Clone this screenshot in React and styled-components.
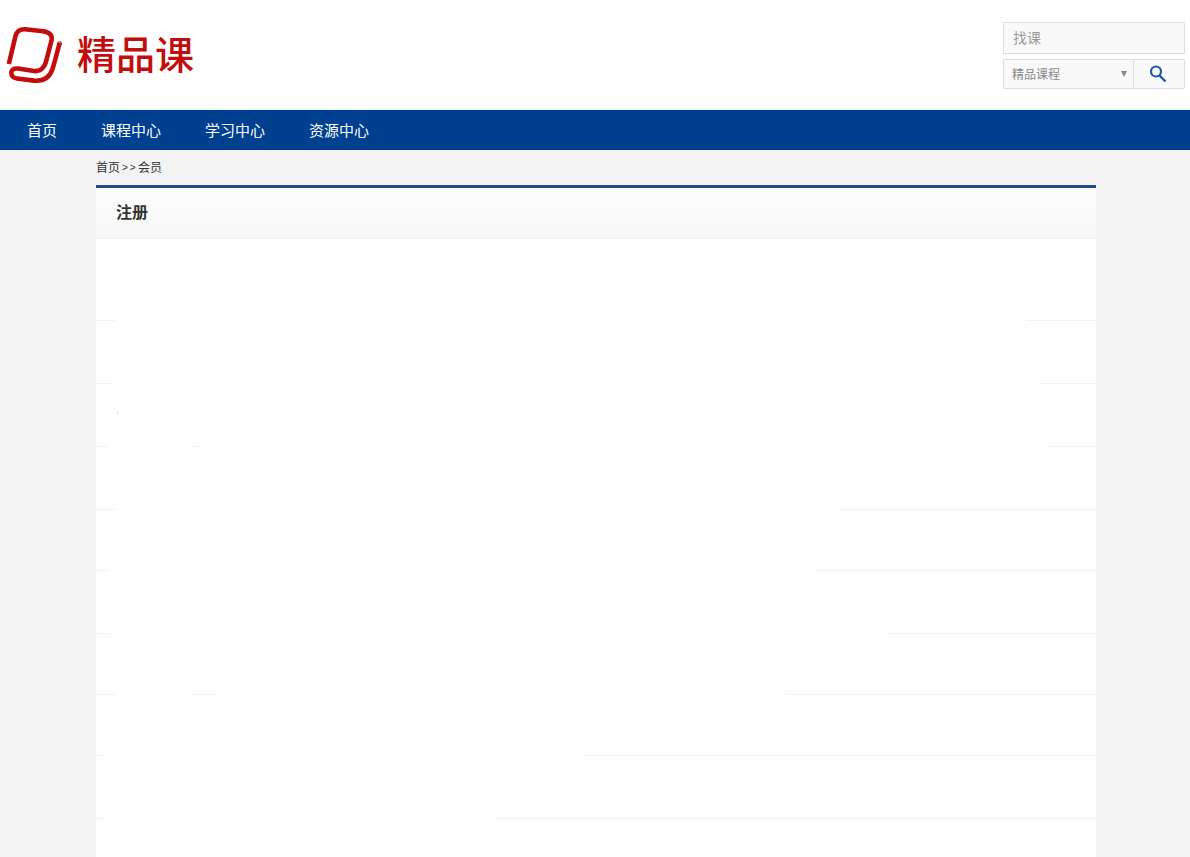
import React from "react";
import styled, { createGlobalStyle } from "styled-components";

const GlobalStyle = createGlobalStyle`
  *, *::before, *::after { box-sizing: border-box; }
  body {
    margin: 0;
    background: #f3f3f3;
    color: #333;
    font: 12px/20px "Noto Sans CJK SC", "Liberation Sans", sans-serif;
  }
`;

const Page = styled.div`
  display: flex;
  flex-direction: column;
  min-height: 100vh;
`;

const Header = styled.header`
  display: flex;
  justify-content: space-between;
  align-items: center;
  height: 110px;
  padding: 0 5px;
  background: #fff;
`;

const Brand = styled.a`
  display: flex;
  align-items: center;
  gap: 14px;
  color: #c30d0d;
  text-decoration: none;
`;

const LogoMark = styled.svg`
  width: 58px;
  height: 60px;
  fill: none;
  stroke: currentColor;
  stroke-width: 4.6;
  stroke-linejoin: round;
`;

const BrandName = styled.span`
  padding-bottom: 6px;
  font-size: 39px;
  font-weight: 500;
  line-height: 56px;
`;

const SearchForm = styled.form`
  display: flex;
  flex-direction: column;
  gap: 5px;
  width: 182px;
`;

const Keyword = styled.input`
  width: 100%;
  height: 32px;
  padding: 0 9px 2px;
  border: 1px solid #ddd;
  border-radius: 1px;
  background: #f9f9f9;
  color: #666;
  font: inherit;
  font-size: 14px;
  &::placeholder { color: #999; opacity: 1; }
`;

const SearchBar = styled.div`
  display: flex;
  height: 30px;
  border: 1px solid #ddd;
  border-radius: 1px;
  background: #f9f9f9;
`;

const ScopeField = styled.div`
  display: flex;
  position: relative;
  width: 130px;
  border-right: 1px solid #ddd;
`;

const Scope = styled.select`
  appearance: none;
  width: 100%;
  padding: 0 20px 0 8px;
  border: 0;
  background: transparent;
  color: #888;
  font: inherit;
`;

const Arrow = styled.svg`
  position: absolute;
  top: 10px;
  right: 6px;
  width: 6px;
  height: 8px;
  fill: #888;
  pointer-events: none;
`;

const SearchButton = styled.button`
  display: flex;
  flex: 1;
  align-items: center;
  justify-content: center;
  padding: 0 3px 0 0;
  border: 0;
  background: transparent;
  color: #1a5ba6;
  cursor: pointer;
`;

const SearchIcon = styled.svg`
  width: 18px;
  height: 18px;
  fill: none;
  stroke: currentColor;
`;

const Nav = styled.nav`
  display: flex;
  height: 40px;
  padding: 0 5px;
  border-bottom: 1px solid #003a85;
  background: #004090;
`;

const NavLink = styled.a`
  padding: 0 22px;
  color: #fff;
  font-size: 15px;
  line-height: 40px;
  text-decoration: none;
`;

const Main = styled.main`
  display: flex;
  flex: 1;
  flex-direction: column;
  width: 100%;
  max-width: 1002px;
  margin: 0 auto;
  padding-left: 2px;
`;

const Breadcrumb = styled.nav`
  display: flex;
  height: 35px;
  line-height: 33px;
`;

const Crumb = styled.a`
  color: #333;
  text-decoration: none;
`;

const Divider = styled.span`
  display: flex;
  gap: 2px;
  width: 18px;
  padding-left: 2px;
  font-family: "Liberation Sans", sans-serif;
  font-size: 10px;
  line-height: 36px;
`;

const Panel = styled.section`
  flex: 1;
  padding-bottom: 38px;
  border-top: 3px solid #234b87;
  background: #fff;
`;

const PanelTitle = styled.h1`
  height: 51px;
  margin: 0;
  padding: 0 20px;
  border-bottom: 1px solid #f3f3f3;
  background: linear-gradient(#fdfdfd, #f8f8f8);
  font-size: 16px;
  line-height: 46px;
`;

const Row = styled.div`
  display: flex;
  align-items: flex-end;
  height: ${({ $height }) => $height}px;
`;

const Rule = styled.span`
  width: ${({ $width }) => $width}px;
  height: 1px;
  margin-left: ${({ $gap }) => ($gap === undefined ? "auto" : `${$gap}px`)};
  background: #f3f3f3;
`;

const Tick = styled.span`
  align-self: center;
  width: 1px;
  height: 4px;
  margin: 0 0 6px 9px;
  background: #f3e2c4;
`;

const navItems = ["首页", "课程中心", "学习中心", "资源中心"];

const rows = [
  { height: 82, left: 20, right: 70 },
  { height: 63, left: 16, right: 56 },
  { height: 63, left: 12, tick: true, middle: { gap: 72, width: 12 }, right: 49 },
  { height: 63, left: 20, right: 256 },
  { height: 61, left: 13, right: 282 },
  { height: 63, left: 14, middle: { gap: 328, width: 3 }, right: 208 },
  { height: 61, left: 19, middle: { gap: 77, width: 25 }, right: 310 },
  { height: 61, left: 6, middle: { gap: 80, width: 3 }, right: 512 },
  { height: 63, left: 8, right: 600 },
];

export default function App() {
  return (
    <Page>
      <GlobalStyle />
      <Header>
        <Brand href="#">
          <LogoMark viewBox="0 0 58 60" aria-hidden="true">
            <path d="M3.800 39 L10.500 11 Q12.500 4 20 4.300 L38.500 6.300 Q48 8 46.600 15 L41.500 35 Q38.500 47 29 46 L13 43.500 Q6.300 43 6.300 48 Q6.500 52.800 12 53.500 L29 55.600 Q43 57 47.500 44 Q50 36 54.600 18" />
            <circle cx="54.600" cy="18.500" r="0.600" strokeWidth="3.500" />
          </LogoMark>
          <BrandName>精品课</BrandName>
        </Brand>
        <SearchForm onSubmit={(event) => event.preventDefault()}>
          <Keyword type="text" placeholder="找课" aria-label="找课" />
          <SearchBar>
            <ScopeField>
              <Scope aria-label="精品课程">
                <option>精品课程</option>
              </Scope>
              <Arrow viewBox="0 0 6 8" aria-hidden="true">
                <path d="M0 1h6L3 7z" />
              </Arrow>
            </ScopeField>
            <SearchButton type="submit" aria-label="搜索">
              <SearchIcon viewBox="0 0 18 18" aria-hidden="true">
                <circle cx="7" cy="6.500" r="5" strokeWidth="2.200" />
                <path d="M10.500 10.500L16.500 16.500" strokeWidth="2.400" />
              </SearchIcon>
            </SearchButton>
          </SearchBar>
        </SearchForm>
      </Header>
      <Nav>
        {navItems.map((label) => (
          <NavLink key={label} href="#">{label}</NavLink>
        ))}
      </Nav>
      <Main>
        <Breadcrumb>
          <Crumb href="#">首页</Crumb>
          <Divider><span>&gt;</span><span>&gt;</span></Divider>
          <Crumb href="#">会员</Crumb>
        </Breadcrumb>
        <Panel>
          <PanelTitle>注册</PanelTitle>
          {rows.map(({ height, left, middle, right, tick }, index) => (
            <Row key={index} $height={height}>
              <Rule $width={left} $gap={0} />
              {tick && <Tick />}
              {middle && <Rule $width={middle.width} $gap={middle.gap} />}
              <Rule $width={right} />
            </Row>
          ))}
        </Panel>
      </Main>
    </Page>
  );
}
